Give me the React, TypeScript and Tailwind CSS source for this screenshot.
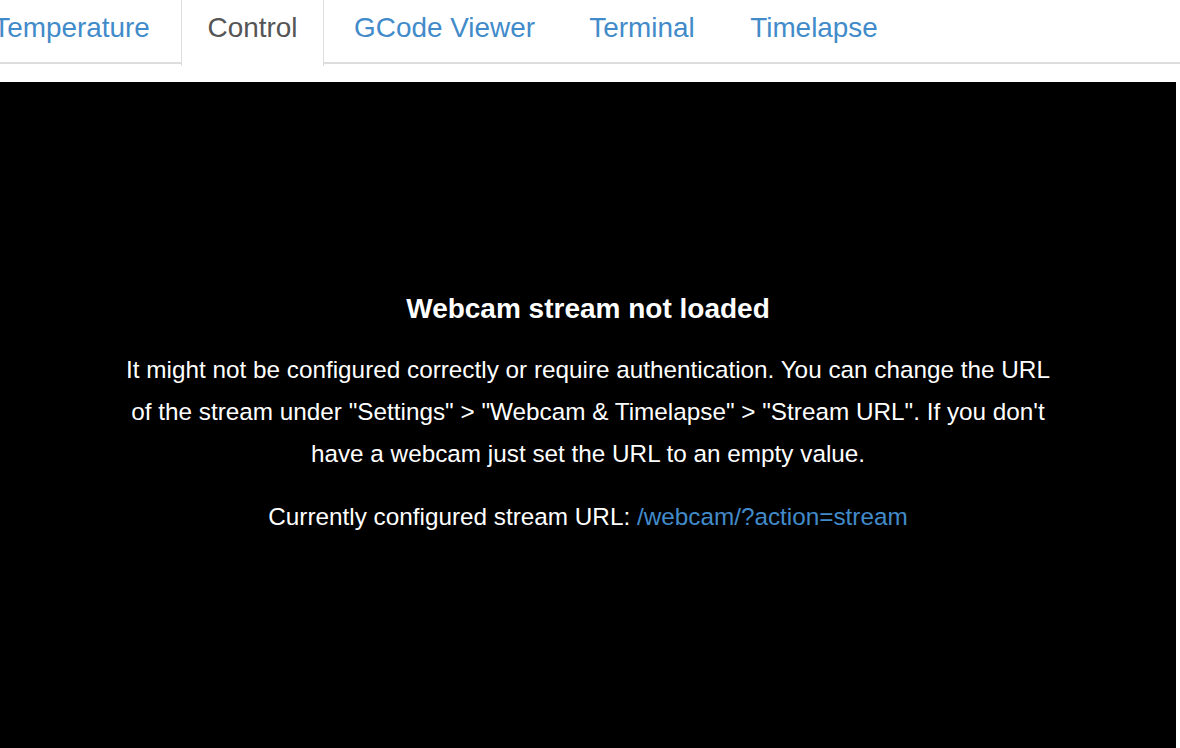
import React from "react";

const tabs = [
  { label: "Temperature", w: 209, active: false },
  { label: "Control", w: 143, active: true },
  { label: "GCode Viewer", w: 231, active: false },
  { label: "Terminal", w: 154, active: false },
  { label: "Timelapse", w: 180, active: false },
];

export default function App() {
  return (
    <div
      className="w-[1180px] h-[748px] overflow-hidden bg-white flex flex-col"
      style={{ fontFamily: '"Liberation Sans", Arial, Helvetica, sans-serif' }}
    >
      <div className="flex border-b-2 border-[#dddddd] mt-[-10px] ml-[-33px] h-[74px] shrink-0">
        {tabs.map((t) => (
          <div
            key={t.label}
            className={
              t.active
                ? "h-[76px] mr-[5px] shrink-0 border border-b-0 border-[#dddddd] bg-white text-[#555555] text-[27.9px] leading-[40px] pt-[17px] text-center"
                : "h-[74px] mr-[5px] shrink-0 border border-transparent border-b-0 text-[#428bca] text-[27.9px] leading-[40px] pt-[17px] text-center"
            }
            style={{ width: t.w }}
          >
            {t.label}
          </div>
        ))}
      </div>
      <div className="h-[18px] shrink-0" />
      <div className="w-[1176px] flex-1 bg-black flex flex-col items-center justify-center text-white text-center">
        <h4 className="text-[28px] leading-[34px] font-bold mb-[23px]">Webcam stream not loaded</h4>
        <p className="text-[24.3px] leading-[42px] max-w-[945px] mb-[21px]">
          It might not be configured correctly or require authentication. You can change the URL of the
          stream under "Settings" &gt; "Webcam &amp; Timelapse" &gt; "Stream URL". If you don't have a
          webcam just set the URL to an empty value.
        </p>
        <p className="text-[24.3px] leading-[42px]">
          Currently configured stream URL: <span className="text-[#428bca]">/webcam/?action=stream</span>
        </p>
      </div>
    </div>
  );
}
